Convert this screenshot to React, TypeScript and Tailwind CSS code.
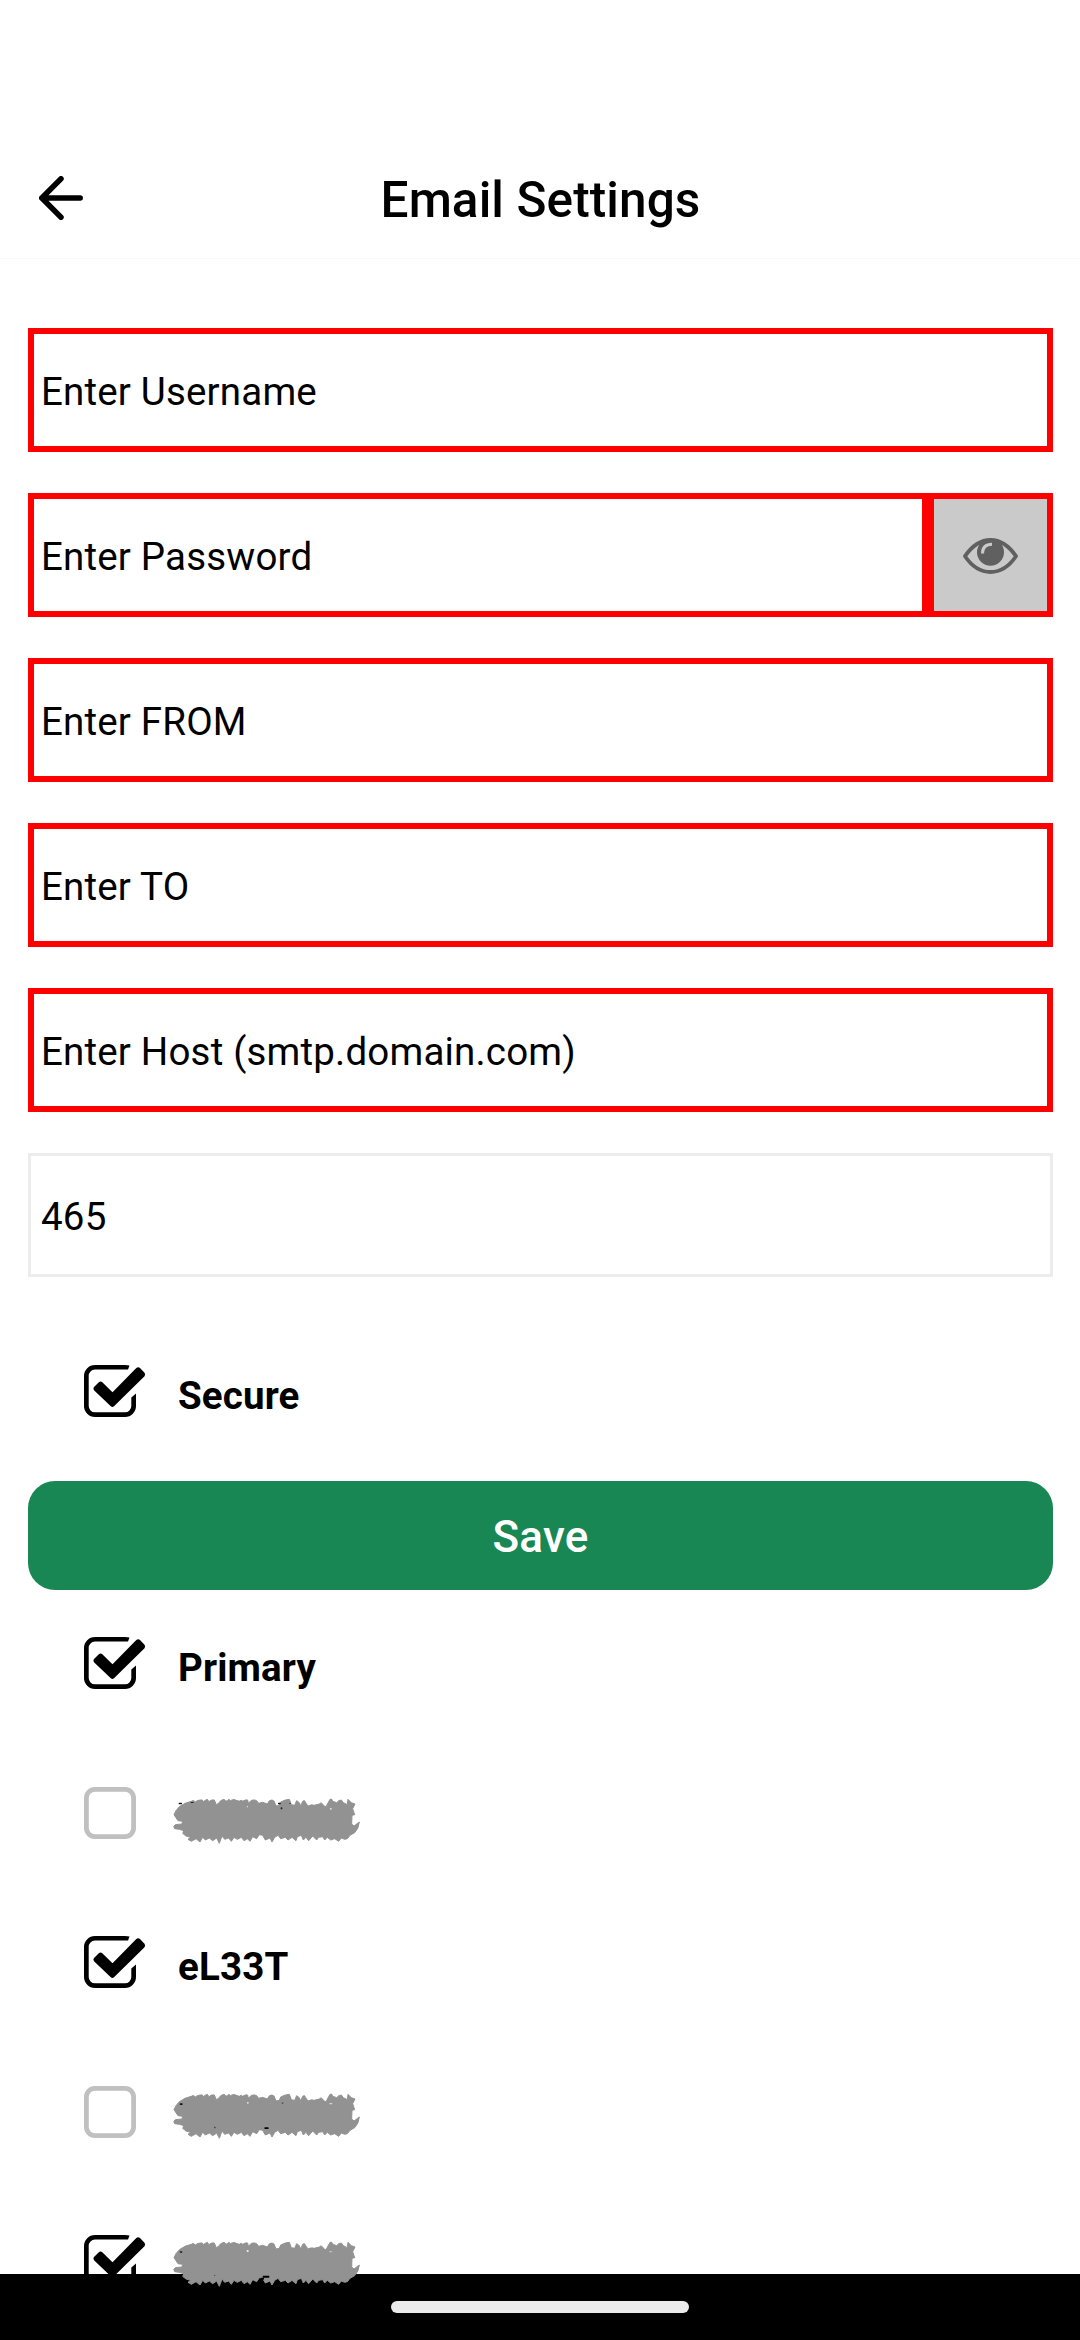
import React from "react";

const rough =
  "M10 70Q14 58 26 46Q42 34 62 30Q68 24 74 32Q80 26 90 26Q96 24 98 31Q104 26 110 24L115 31Q122 24 131 26L137 40Q144 38 150 28L160 24Q168 34 174 24Q180 30 184 26Q192 22 196 27L206 30Q212 24 216 30Q224 24 231 26L233 36L242 27Q252 24 258 28L264 36L276 33L290 38Q296 24 304 26L310 29L316 44L326 42L330 32L344 26L356 24L362 40L372 42L378 28L386 34L390 44L396 30Q402 24 405 34L412 44Q424 38 430 42L446 38Q452 30 460 44L466 46L478 24Q484 20 486 30L498 34Q504 26 512 26L518 34L530 40L532 24L542 34L553 38L546 52L552 70L544 72L543 98L550 104L566 92Q564 112 552 124L538 132L530 142L522 144L512 140L504 150L492 142L480 146L470 138L462 146L456 136L444 138L438 146L426 134L414 148L406 138L398 146L392 132L380 136L376 148L364 138L352 146L344 138L330 142L322 132L312 138L304 152L298 140L284 146L276 132L266 130L258 142L246 136L238 150L230 142L220 148L212 138L200 144L190 138L182 150L174 140L162 144L154 134L146 156L138 140L126 148L116 140L104 146L96 138L88 152L76 142L62 150L52 144L60 138L46 134L36 126L40 118L26 114L12 112Q6 104 14 100L34 98L36 90L22 88Z";

type Spot = [number, number, number, number, string];

const patches: Record<string, { offset: string; spots: Spot[] }> = {
  first: {
    offset: "mt-[10px]",
    spots: [
      [24, 34, 10, 5, "#111"],
      [60, 32, 9, 3, "#222"],
      [322, 34, 8, 5, "#111"],
      [330, 48, 5, 6, "#222"],
      [356, 34, 4, 4, "#222"],
      [200, 28, 22, 5, "#929292"],
      [228, 44, 4, 4, "#e5e5e5"],
      [478, 50, 5, 5, "#eeeeee"],
    ],
  },
  second: {
    offset: "mt-[6px]",
    spots: [
      [27, 51, 9, 5, "#161616"],
      [281, 123, 13, 5, "#050505"],
      [130, 121, 5, 5, "#444"],
      [333, 48, 5, 5, "#555"],
      [229, 47, 5, 5, "#e8e8e8"],
      [476, 50, 9, 4, "#d5d5d5"],
    ],
  },
  third: {
    offset: "mt-[5px]",
    spots: [
      [27, 51, 8, 4, "#161616"],
      [276, 124, 20, 6, "#000"],
      [270, 130, 10, 6, "#000"],
      [228, 47, 6, 6, "#eeeeee"],
      [130, 121, 4, 4, "#444"],
      [476, 50, 8, 4, "#c5c5c5"],
    ],
  },
};

function Scribble({ spots }: { spots: Spot[] }) {
  return (
    <svg width="187" height="47" viewBox="7 17 561 141" className="relative z-10 shrink-0">
      <path d={rough} fill="#929292" strokeLinejoin="round" stroke="#929292" strokeWidth="3" />
      {spots.map(([x, y, w, h, fill]) => (
        <rect key={`${x}-${y}`} x={x} y={y} width={w} height={h} rx="2" fill={fill} />
      ))}
    </svg>
  );
}

function Box({ checked }: { checked: boolean }) {
  return (
    <svg width="62" height="52" viewBox="0 0 62 52" className="shrink-0" fill="none">
      {checked ? (
        <>
          <path
            d="M45.500 0.600Q43.500 0 41 0H11A11 11 0 0 0 0 11V41A11 11 0 0 0 11 52H41A11 11 0 0 0 52 41V28.500L47.300 32.500V41A6.300 6.300 0 0 1 41 47.300H11A6.300 6.300 0 0 1 4.700 41V11A6.300 6.300 0 0 1 11 4.600H44Z"
            fill="#000"
          />
          <path
            d="M14.800 17.200Q16.500 15.800 18.300 17.200L28.500 27.200 52.300 3Q54.200 1.500 56 3L60.500 7.700Q61.800 9.500 60.500 11.200L30 41.200Q28.400 42.600 26.800 41.200L10 25.200Q8.800 23.600 10 22Z"
            fill="#000"
          />
        </>
      ) : (
        <rect x="2.4" y="2.4" width="47.2" height="47.2" rx="8.500" stroke="#c0c0c0" strokeWidth="4.8" />
      )}
    </svg>
  );
}

function CheckRow({ checked, label, patch }: { checked: boolean; label?: string; patch?: string }) {
  return (
    <div className="flex h-[52px] shrink-0 items-start pl-14">
      <Box checked={checked} />
      {label && (
        <span className="mt-2 ml-8 text-[38.5px] leading-[46px] font-bold tracking-[0.15px]">{label}</span>
      )}
      {patch && (
        <span className={`ml-[27px] ${patches[patch].offset}`}>
          <Scribble spots={patches[patch].spots} />
        </span>
      )}
    </div>
  );
}

function Field({ text }: { text: string }) {
  return (
    <div className="flex h-[124px] items-center border-[6px] border-[#ff0000] pt-[3px] pl-[7px] text-[38.5px]">
      <span className="tracking-[0.18px]">{text}</span>
    </div>
  );
}

function Eye() {
  return (
    <svg width="55" height="36" viewBox="0 0 55 36" fill="none" className="mt-0.5">
      <path
        d="M2 18.200C9 8 18 2 27.500 2S46 8 53 18.200C46 28.500 37 34 27.500 34S9 28.500 2 18.200Z"
        stroke="#606060"
        strokeWidth="3.800"
        strokeLinejoin="round"
      />
      <circle cx="27.500" cy="14.200" r="13.500" fill="#606060" />
      <path d="M19.500 15.500C19.500 9.500 23 6.200 29 6.200" stroke="#cacaca" strokeWidth="3" />
    </svg>
  );
}

export default function App() {
  return (
    <div className="flex h-[2340px] w-[1080px] flex-col overflow-hidden bg-white font-['Roboto',sans-serif] text-black">
      <header className="flex h-[259px] shrink-0 items-end border-b border-[#f8f8f8] pb-[29px]">
        <div className="flex w-full items-center">
          <div className="w-40 pb-1 pl-[39px]">
            <svg
              width="44"
              height="44"
              viewBox="0 0 44 44"
              fill="none"
              stroke="#000"
              strokeWidth="5.500"
              strokeLinecap="round"
              strokeLinejoin="round"
            >
              <path d="M22 2.800L2.800 22L22 41.200M2.800 22H41.200" />
            </svg>
          </div>
          <h1 className="flex-1 pl-px text-center text-[49.5px] leading-[58px] font-medium tracking-[0.1px]">
            Email Settings
          </h1>
          <div className="w-40" />
        </div>
      </header>
      <main className="flex h-[2015px] shrink-0 flex-col pr-[27px] pl-7">
        <div className="mt-[69px] flex flex-col gap-[41px]">
          <Field text="Enter Username" />
          <div className="flex">
            <div className="flex-1">
              <Field text="Enter Password" />
            </div>
            <div className="flex h-[124px] w-[125px] items-center justify-center border-[6px] border-[#ff0000] bg-[#cacaca]">
              <Eye />
            </div>
          </div>
          <Field text="Enter FROM" />
          <Field text="Enter TO" />
          <Field text="Enter Host (smtp.domain.com)" />
          <div className="flex h-[124px] items-center border-[3px] border-[#ececec] pt-[3px] pl-2.5 text-[38.5px]">
            <span className="tracking-[0.18px]">465</span>
          </div>
        </div>
        <div className="mt-[88px]">
          <CheckRow checked label="Secure" />
        </div>
        <button className="mt-16 flex h-[109px] shrink-0 items-center justify-center rounded-[27px] bg-[#198754] pt-[3px] text-[44px] font-medium tracking-[0.2px] text-white">
          Save
        </button>
        <div className="mt-[47px] flex flex-col gap-[97.5px]">
          <CheckRow checked label="Primary" />
          <CheckRow checked={false} patch="first" />
          <CheckRow checked label="eL33T" />
          <CheckRow checked={false} patch="second" />
          <CheckRow checked patch="third" />
        </div>
      </main>
      <footer className="flex h-[66px] shrink-0 items-start justify-center bg-black pt-[27px]">
        <div className="h-3 w-[298px] rounded-full bg-[#ebebeb]" />
      </footer>
    </div>
  );
}
